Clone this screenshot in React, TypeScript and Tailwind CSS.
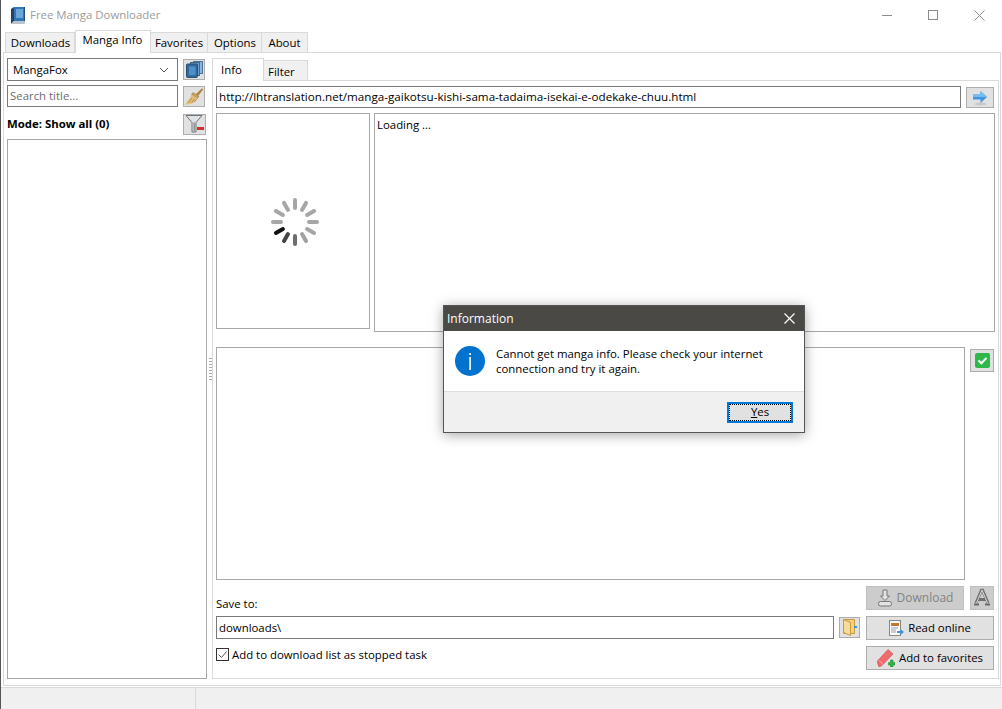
import React from 'react';

const FONT = "font-['Open_Sans','Noto_Sans',sans-serif]";

const BookIcon = () => (
  <svg width="14" height="17" viewBox="0 0 14 17">
    <path d="M3 0h11v14H3z" fill="#2f78b5" />
    <path d="M0 2 3 0v14l-3 3z" fill="#27435f" />
    <path d="M0 17 3 14h11v3z" fill="#b9c4ce" />
    <path d="M5 2h7v9H5z" fill="#6aa6d8" />
    <path d="M13.500 0v14" stroke="#1f4f7c" />
  </svg>
);

const PagesIcon = () => (
  <svg width="17" height="17" viewBox="0 0 17 17">
    <rect x="7.500" y=".5" width="9" height="12" fill="#8fb6d8" stroke="#4a7296" />
    <rect x="4.500" y="1.500" width="9" height="13" fill="#6f9fc9" stroke="#3f6a90" />
    <rect x=".5" y="3" width="11" height="13.500" rx="1" fill="#2f6a9f" stroke="#2f4f6f" />
    <rect x="3" y="5.500" width="6.500" height="8.500" fill="#4f8fca" />
  </svg>
);

const BroomIcon = () => (
  <svg width="20" height="17" viewBox="0 0 20 17">
    <path d="M12 6 17.500.8c.8-.7 2 .4 1.300 1.300L14 8z" fill="#b5813c" />
    <path d="M9 4.500 14.800 8.500 13.500 10.500 7.500 6.500z" fill="#c9a35c" stroke="#8f6a33" strokeWidth=".5" />
    <path d="M7.500 6.500 13.500 10.500C12.500 14 6.500 17 0 16.500c2-1 3.200-2.500 3-3.500C5 12 6.500 9.500 7.500 6.500z" fill="#e0bd7a" />
    <path d="M4.500 14.500 8 10M7.500 15 10.500 11M10.500 14 12 11.500" stroke="#b08a45" strokeWidth=".8" />
  </svg>
);

const FilterMinusIcon = () => (
  <svg width="20" height="20" viewBox="0 0 20 20">
    <path d="M1 1.500h16L11 8.500V18H7V8.500z" fill="#dfe2e4" stroke="#70767a" />
    <path d="M8.500 8.500H10V17H8.500z" fill="#8d9397" />
    <rect x="12" y="13" width="7" height="3" fill="#d3302f" />
  </svg>
);

const ArrowIcon = () => (
  <svg width="16" height="16" viewBox="0 0 16 16">
    <ellipse cx="8.500" cy="14" rx="6" ry="1.500" fill="#c8c8c8" />
    <path d="M1 4.500h7.500V1L15 7l-6.500 6V9.500H1z" fill="#3f97e0" />
    <path d="M1 4.500h7.500V1L15 7H1z" fill="#74bdf2" />
  </svg>
);

const CheckIcon = () => (
  <svg width="15" height="15" viewBox="0 0 15 15">
    <rect width="15" height="15" rx="2" fill="#2eb84c" />
    <path d="m3.500 7.500 2.800 2.800 5.200-5.300" fill="none" stroke="#fff" strokeWidth="2" />
  </svg>
);

const DownloadIcon = () => (
  <svg width="16" height="18" viewBox="0 0 16 18">
    <path d="M6 1h4v6h2.500L8 11.500 3.500 7H6z" fill="#e2e2e2" stroke="#777" />
    <rect x="1.500" y="12.500" width="13" height="4.500" rx="2" fill="#e2e2e2" stroke="#777" />
  </svg>
);

const GlyphAIcon = () => (
  <svg width="18" height="20" viewBox="0 0 18 20">
    <path d="M9 1 3 15M9 1l6 14M5.500 11.500h7" fill="none" stroke="#6f6f6f" strokeWidth="3" />
    <path d="M9 2 3.500 15M9 2l5.500 13" fill="none" stroke="#dcdcdc" />
    <path d="M1 16.500h5M12 16.500h5" stroke="#666" strokeWidth="2" />
  </svg>
);

const ReadIcon = () => (
  <svg width="15" height="16" viewBox="0 0 15 16">
    <rect x=".5" y=".5" width="11" height="15" fill="#fafafa" stroke="#888" />
    <rect x="2" y="3" width="8" height="3" fill="#c5792b" />
    <path d="M2 8h7M2 10h5M2 12h5" stroke="#9aa0a6" />
    <path d="M8 11h3.500V9l3.500 3-3.500 3v-2H8z" fill="#3f93dc" />
  </svg>
);

const PenPlusIcon = () => (
  <svg width="18" height="18" viewBox="0 0 18 18">
    <path d="M0 12.500 11 .5l5 4.500L5 16.500l-3 1.500z" fill="#ee6b6f" stroke="#c9474c" strokeWidth=".6" />
    <path d="M2 11.500 4 13l2.500 3" fill="none" stroke="#f7a5a7" />
    <path d="M11.500 13.500h2v-2.500h2.500v2.500h2V16h-2v2h-2.500v-2h-2z" fill="#2fb344" stroke="#18812b" strokeWidth=".5" />
  </svg>
);

const FolderIcon = () => (
  <svg width="14" height="17" viewBox="0 0 14 17">
    <path d="M.5.5h11v14H.5z" fill="#f4d27e" stroke="#c79a3f" />
    <path d="M.5.5l7 3v13l-7-3z" fill="#f7dc93" stroke="#c79a3f" />
    <rect x="11" y="7" width="3" height="2" fill="#3f93dc" />
  </svg>
);

const Spinner = () => {
  const spokes = [
    { a: 0, c: '#a6a6a6' },
    { a: 30, c: '#a6a6a6' },
    { a: 60, c: '#a6a6a6' },
    { a: 90, c: '#a6a6a6' },
    { a: 120, c: '#a6a6a6' },
    { a: 150, c: '#a0a0a0' },
    { a: 180, c: '#6e6e6e' },
    { a: 210, c: '#454545' },
    { a: 240, c: '#111111' },
    { a: 270, c: '#a6a6a6' },
    { a: 300, c: '#a6a6a6' },
    { a: 330, c: '#a6a6a6' },
  ];
  return (
    <svg width="48" height="48" viewBox="0 0 48 48">
      {spokes.map((s) => (
        <line
          key={s.a}
          x1="24"
          y1="2"
          x2="24"
          y2="10"
          stroke={s.c}
          strokeWidth="4"
          strokeLinecap="round"
          transform={`rotate(${s.a} 24 24)`}
        />
      ))}
    </svg>
  );
};

const IconButton = ({ children, className = '' }: { children: React.ReactNode; className?: string }) => (
  <div className={`flex items-center justify-center border border-[#adadad] bg-[#e1e1e1] ${className}`}>{children}</div>
);

const TextButton = ({ icon, label, disabled }: { icon: React.ReactNode; label: string; disabled?: boolean }) => (
  <div
    className={`flex h-6 items-center justify-center gap-1 border ${
      disabled ? 'border-[#bfbfbf] bg-[#cccccc] text-xs text-[#838383]' : 'border-[#adadad] bg-[#e1e1e1] text-black'
    }`}
  >
    {icon}
    <span>{label}</span>
  </div>
);

const Tab = ({ label, active, className = '' }: { label: string; active?: boolean; className?: string }) =>
  active ? (
    <div className={`relative z-10 -mb-px flex h-[23px] items-center justify-center border border-b-0 border-[#d9d9d9] bg-white pb-1 ${className}`}>
      {label}
    </div>
  ) : (
    <div className={`mt-0.5 flex h-5 items-center justify-center border border-b-0 border-l-0 border-[#d9d9d9] bg-[#f0f0f0] first:border-l ${className}`}>
      {label}
    </div>
  );

export default function App() {
  return (
    <div className={`relative flex h-[709px] w-[1002px] flex-col overflow-hidden border-l border-[#555] bg-white text-[11.4px] text-black ${FONT}`}>
      {/* title bar */}
      <div className="flex h-[30px] items-center pl-[10px]">
        <BookIcon />
        <span className="ml-[5px] text-[#9b9b9b]">Free Manga Downloader</span>
        <div className="ml-auto flex h-full items-center">
          <div className="flex w-[46px] justify-center">
            <div className="h-px w-2.5 bg-[#8c8c8c]" />
          </div>
          <div className="flex w-[46px] justify-center">
            <div className="h-2.5 w-2.5 border border-[#8c8c8c]" />
          </div>
          <div className="flex w-[46px] justify-center">
            <svg width="11" height="11" viewBox="0 0 11 11">
              <path d="m.5.5 10 10M10.500.5l-10 10" stroke="#8c8c8c" />
            </svg>
          </div>
        </div>
      </div>

      {/* main tabs */}
      <div className="flex pl-1">
        <Tab label="Downloads" className="w-[70px] pl-[1px]" />
        <Tab label="Manga Info" active className="w-[76px] pr-[1px]" />
        <Tab label="Favorites" className="w-[57px]" />
        <Tab label="Options" className="w-[54px] pl-[1px]" />
        <Tab label="About" className="w-[46px]" />
      </div>

      <div className="ml-[2px] mr-[1px] flex h-[634px] gap-[5px] border border-[#d9d9d9] bg-white px-[3px] pb-[6px] pt-[5px]">
        {/* left column */}
        <div className="flex w-[200px] shrink-0 flex-col">
          <div className="flex h-[23px] gap-[5px]">
            <div className="flex w-[171px] items-center justify-between border border-[#7a7a7a] pl-[5px] pr-2">
              <span>MangaFox</span>
              <svg width="10" height="6" viewBox="0 0 10 6">
                <path d="m1 1 4 4 4-4" fill="none" stroke="#555" />
              </svg>
            </div>
            <IconButton className="mt-px h-[21px] w-[22px]">
              <PagesIcon />
            </IconButton>
          </div>
          <div className="mt-1 flex h-[22px] gap-[5px]">
            <div className="flex w-[171px] items-center border border-[#7a7a7a] pl-[2px] text-[#6d6d6d]">Search title...</div>
            <IconButton className="mt-px h-[21px] w-[22px]">
              <BroomIcon />
            </IconButton>
          </div>
          <div className="mt-[6px] flex h-[22px] items-center justify-between pr-[1px]">
            <span className="font-bold">Mode: Show all (0)</span>
            <IconButton className="h-[21px] w-[23px]">
              <FilterMinusIcon />
            </IconButton>
          </div>
          <div className="mt-[4px] flex-1 border border-[#a8a8a8]" />
        </div>

        {/* right tabs */}
        <div className="flex flex-1 flex-col">
          <div className="flex">
            <div className="relative z-10 -mb-px flex h-[23px] w-[52px] items-start border border-b-0 border-[#d9d9d9] bg-white pl-2 pt-0.5">
              Info
            </div>
            <div className="mt-[2px] flex h-5 w-[44px] items-center border border-b-0 border-l-0 border-[#d9d9d9] bg-[#f0f0f0] pl-1 pt-0.5">
              Filter
            </div>
          </div>
          <div className="flex flex-1 flex-col border border-[#d9d9d9] px-[3px] pt-[5px]">
            <div className="flex h-[22px] gap-[5px]">
              <div className="flex w-[745px] items-center border border-[#7a7a7a] pl-[2px] text-[11.65px]">
                http://lhtranslation.net/manga-gaikotsu-kishi-sama-tadaima-isekai-e-odekake-chuu.html
              </div>
              <IconButton className="mt-px h-[21px] w-[28px]">
                <ArrowIcon />
              </IconButton>
            </div>

            <div className="mt-[5px] flex h-[219px] gap-1">
              <div className="flex h-[216px] w-[154px] items-center justify-center border border-[#a8a8a8] pl-[3px] pt-[2px]">
                <Spinner />
              </div>
              <div className="w-[621px] border border-[#a8a8a8] pl-[2px] pt-[2px]">Loading ...</div>
            </div>

            <div className="mt-[15px] flex gap-[5px]">
              <div className="h-[233px] w-[749px] border border-[#a8a8a8]" />
              <IconButton className="mt-[2px] h-[23px] w-6">
                <CheckIcon />
              </IconButton>
            </div>

            <div className="mt-[6px] flex">
              <div className="flex w-[644px] flex-col">
                <div className="mt-[9px]">Save to:</div>
                <div className="mt-[4px] flex items-center gap-[5px]">
                  <div className="flex h-[23px] w-[618px] shrink-0 items-center border border-[#7a7a7a] pl-[2px]">downloads\</div>
                  <IconButton className="h-[21px] w-[21px] shrink-0">
                    <FolderIcon />
                  </IconButton>
                </div>
                <div className="mt-[7px] flex items-center gap-[3px]">
                  <div className="flex h-[13px] w-[13px] items-center justify-center border border-[#333]">
                    <svg width="11" height="11" viewBox="0 0 11 11">
                      <path d="m1.500 5.500 3 3 5-6" fill="none" stroke="#555" />
                    </svg>
                  </div>
                  <span>Add to download list as stopped task</span>
                </div>
              </div>
              <div className="ml-[6px] flex w-[128px] flex-col gap-1.5">
                <div className="flex gap-1.5">
                  <div className="w-[98px]">
                    <TextButton icon={<DownloadIcon />} label="Download" disabled />
                  </div>
                  <div className="flex h-6 w-6 items-center justify-center border border-[#bfbfbf] bg-[#cccccc]">
                    <GlyphAIcon />
                  </div>
                </div>
                <TextButton icon={<ReadIcon />} label="Read online" />
                <TextButton icon={<PenPlusIcon />} label="Add to favorites" />
              </div>
            </div>
          </div>
        </div>
      </div>

      {/* status bar */}
      <div className="mt-[1px] flex flex-1 border-t border-[#d9d9d9] bg-[#f0f0f0]">
        <div className="w-[195px] border-r border-[#d9d9d9]" />
      </div>

      {/* splitter grip */}
      <div className="absolute left-[208px] top-[358px] flex flex-col gap-[2px]">
        {[0, 1, 2, 3, 4, 5, 6, 7].map((i) => (
          <div key={i} className="h-px w-[3px] bg-[#aaa]" />
        ))}
      </div>

      {/* message box */}
      <div className="absolute left-[442px] top-[305px] flex h-[128px] w-[362px] flex-col border border-[#555] bg-white shadow-[0_2px_12px_rgba(0,0,0,0.35)]">
        <div className="flex h-[25px] items-center justify-between bg-[#4a4945] pl-[3px] pr-[9px] text-white">
          <span className="text-xs">Information</span>
          <svg width="11" height="11" viewBox="0 0 11 11">
            <path d="m.5.5 10 10M10.500.5l-10 10" stroke="#fff" strokeWidth="1.200" />
          </svg>
        </div>
        <div className="flex h-[61px] items-center gap-[11px] border-b border-[#dfdfdf] pl-[11px]">
          <svg width="30" height="30" viewBox="0 0 30 30" className="shrink-0">
            <circle cx="15" cy="15" r="15" fill="#0173cf" />
            <rect x="14.300" y="11" width="1.600" height="13" fill="#fff" />
            <rect x="14.300" y="7" width="1.600" height="2" fill="#fff" />
          </svg>
          <span className="w-[290px] leading-[15px]">Cannot get manga info. Please check your internet connection and try it again.</span>
        </div>
        <div className="flex flex-1 items-center justify-end bg-[#f0f0f0] pr-[11px]">
          <div className="flex h-[21px] w-[66px] items-center justify-center border-2 border-[#0078d7] bg-[#e1e1e1] outline-1 -outline-offset-3 outline-dotted outline-black">
            <span>
              <span className="underline">Y</span>es
            </span>
          </div>
        </div>
      </div>
    </div>
  );
}
